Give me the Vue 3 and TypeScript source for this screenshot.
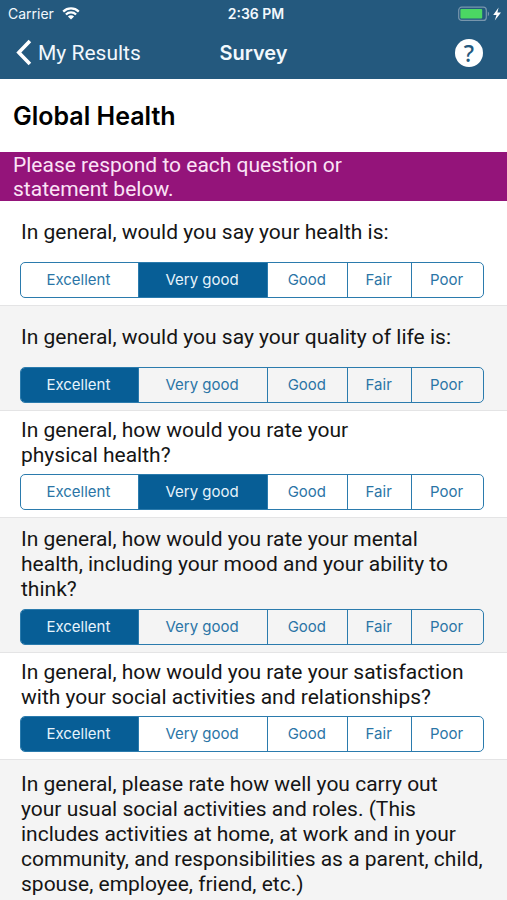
<script setup lang="ts">
import { reactive } from 'vue'

interface Question {
  id: string
  text: string
  tall?: boolean
  scored: boolean
}

const choices: string[] = ['Excellent', 'Very good', 'Good', 'Fair', 'Poor']

const questions: Question[] = [
  { id: 'health', text: 'In general, would you say your health is:', scored: true },
  { id: 'quality', text: 'In general, would you say your quality of life is:', scored: true },
  { id: 'physical', text: 'In general, how would you rate your\nphysical health?', scored: true },
  {
    id: 'mental',
    text: 'In general, how would you rate your mental\nhealth, including your mood and your ability to\nthink?',
    tall: true,
    scored: true,
  },
  {
    id: 'social',
    text: 'In general, how would you rate your satisfaction\nwith your social activities and relationships?',
    scored: true,
  },
  {
    id: 'roles',
    text: 'In general, please rate how well you carry out\nyour usual social activities and roles. (This\nincludes activities at home, at work and in your\ncommunity, and responsibilities as a parent, child,\nspouse, employee, friend, etc.)',
    scored: false,
  },
]

const answers = reactive<Record<string, string>>({
  health: 'Very good',
  quality: 'Excellent',
  physical: 'Very good',
  mental: 'Excellent',
  social: 'Excellent',
})
</script>

<template>
  <div class="screen">
    <header class="top">
      <div class="status">
        <span class="carrier">
          Carrier
          <svg class="wifi" viewBox="0 0 18 13" aria-hidden="true">
            <path d="M1.2 4.6a11.2 11.2 0 0 1 15.6 0" />
            <path d="M3.9 7.5a7.3 7.3 0 0 1 10.2 0" />
            <path class="solid" d="M9 12.4 5.9 9.5a4.4 4.4 0 0 1 6.2 0z" />
          </svg>
        </span>
        <span class="clock">2:36 PM</span>
        <span class="power">
          <svg class="battery" viewBox="0 0 44 16" aria-hidden="true">
            <rect x="0.7" y="1.2" width="27.6" height="13.2" rx="3" fill="none" stroke="#7896ad" stroke-width="1.2" />
            <rect x="2.4" y="3" width="21.8" height="9.6" rx="1" fill="#4bd763" />
            <path d="M29.8 5.6c1.8.8 1.8 3.8 0 4.6z" fill="#7896ad" />
            <path d="M40.6 1.6 35.2 9h3.3l-1.7 5.6L43 6.6h-3.6z" fill="#fff" />
          </svg>
        </span>
      </div>
      <nav class="bar">
        <a class="back" href="#results">
          <svg class="chevron" viewBox="0 0 16 27" aria-hidden="true">
            <path d="M13.9 1.9 2.8 13.5l11.1 11.6" />
          </svg>
          My Results
        </a>
        <span class="name">Survey</span>
        <button class="help" type="button" aria-label="Help">?</button>
      </nav>
    </header>

    <main class="content">
      <h1 class="title">Global Health</h1>
      <p class="banner">Please respond to each question or<br />statement below.</p>

      <section v-for="q in questions" :key="q.id" class="row" :class="{ open: !q.scored }">
        <h2 :id="q.id" class="question" :class="{ tall: q.tall }">{{ q.text }}</h2>
        <div v-if="q.scored" class="segments" role="radiogroup" :aria-labelledby="q.id">
          <label v-for="c in choices" :key="c" class="segment" :class="{ on: answers[q.id] === c }">
            <input v-model="answers[q.id]" class="radio" type="radio" :name="q.id" :value="c" />
            {{ c }}
          </label>
        </div>
      </section>
    </main>
  </div>
</template>

<style>
body {
  margin: 0;
  background: #fff;
}
</style>

<style scoped>
.screen {
  display: flex;
  flex-direction: column;
  min-height: 100vh;
  font-family: Inter, 'Liberation Sans', sans-serif;
  color: #151515;
  background: #fff;
}
.top {
  background: #24597e;
  color: #f2f8fd;
}
.status {
  display: grid;
  grid-template-columns: 1fr auto 1fr;
  align-items: center;
  height: 27px;
  padding: 0 5px 0 8px;
  font-size: 14px;
}
.carrier {
  display: flex;
  align-items: center;
  gap: 8px;
}
.wifi {
  width: 18px;
  height: 13px;
  fill: none;
  stroke: #fff;
  stroke-width: 2.3;
}
.wifi .solid {
  fill: #fff;
  stroke: none;
}
.clock {
  padding-left: 2px;
  font-weight: 600;
}
.power {
  display: flex;
  justify-content: flex-end;
}
.battery {
  width: 44px;
  height: 16px;
}
.bar {
  display: grid;
  grid-template-columns: 1fr auto 1fr;
  align-items: center;
  height: 52px;
  padding: 0 24px 1px 16px;
  box-sizing: border-box;
}
.back {
  display: flex;
  align-items: center;
  gap: 6px;
  color: inherit;
  font-family: Roboto, 'Liberation Sans', sans-serif;
  font-size: 21px;
  text-decoration: none;
}
.chevron {
  width: 16px;
  height: 27px;
  fill: none;
  stroke: #fff;
  stroke-width: 3.6;
}
.name {
  padding-left: 8px;
  font-size: 20px;
  font-weight: 600;
}
.help {
  justify-self: end;
  width: 28px;
  height: 28px;
  padding: 0;
  border: 0;
  border-radius: 50%;
  background: #fff;
  color: #24597e;
  font: 500 23px/28px 'Noto Sans', sans-serif;
}
.content {
  display: flex;
  flex: 1;
  flex-direction: column;
}
.title {
  margin: 0;
  padding: 20px 13px 19px;
  color: #000;
  font-size: 25px;
  font-weight: 600;
  line-height: 34px;
}
.banner {
  margin: 0;
  padding: 1px 13px 0;
  background: #94147a;
  color: #fbe3f6;
  font-family: Roboto, 'Liberation Sans', sans-serif;
  font-size: 21px;
  line-height: 24px;
}
.row {
  padding: 0 23px 7px 20px;
  border-bottom: 1px solid #e4e4e5;
}
.row:nth-of-type(even) {
  background: #f4f4f4;
}
.row.open {
  flex: 1;
  padding-top: 5px;
  padding-right: 20px;
  border-bottom: 0;
}
.question {
  display: flex;
  align-items: center;
  box-sizing: border-box;
  min-height: 61px;
  margin: 0;
  padding: 7px 0 6px 1px;
  font-family: Roboto, 'Liberation Sans', sans-serif;
  font-size: 21px;
  font-weight: 400;
  line-height: 25px;
  white-space: pre-line;
}
.question.tall {
  padding: 9px 0 7px 1px;
}
.segments {
  display: grid;
  grid-template-columns: 117fr 130fr 80fr 64fr 72fr;
  height: 36px;
  box-sizing: border-box;
  border: 1px solid #2b7bad;
  border-radius: 5px;
  overflow: hidden;
}
.segment {
  position: relative;
  display: flex;
  align-items: center;
  justify-content: center;
  padding: 0 2px 2px 0;
  color: #2b75a6;
  font-size: 15px;
  cursor: pointer;
}
.segment + .segment {
  border-left: 1px solid #2b7bad;
}
.segment.on {
  background: #075e96;
  color: #e6f3fb;
}
.radio {
  position: absolute;
  inset: 0;
  margin: 0;
  opacity: 0;
}
</style>
